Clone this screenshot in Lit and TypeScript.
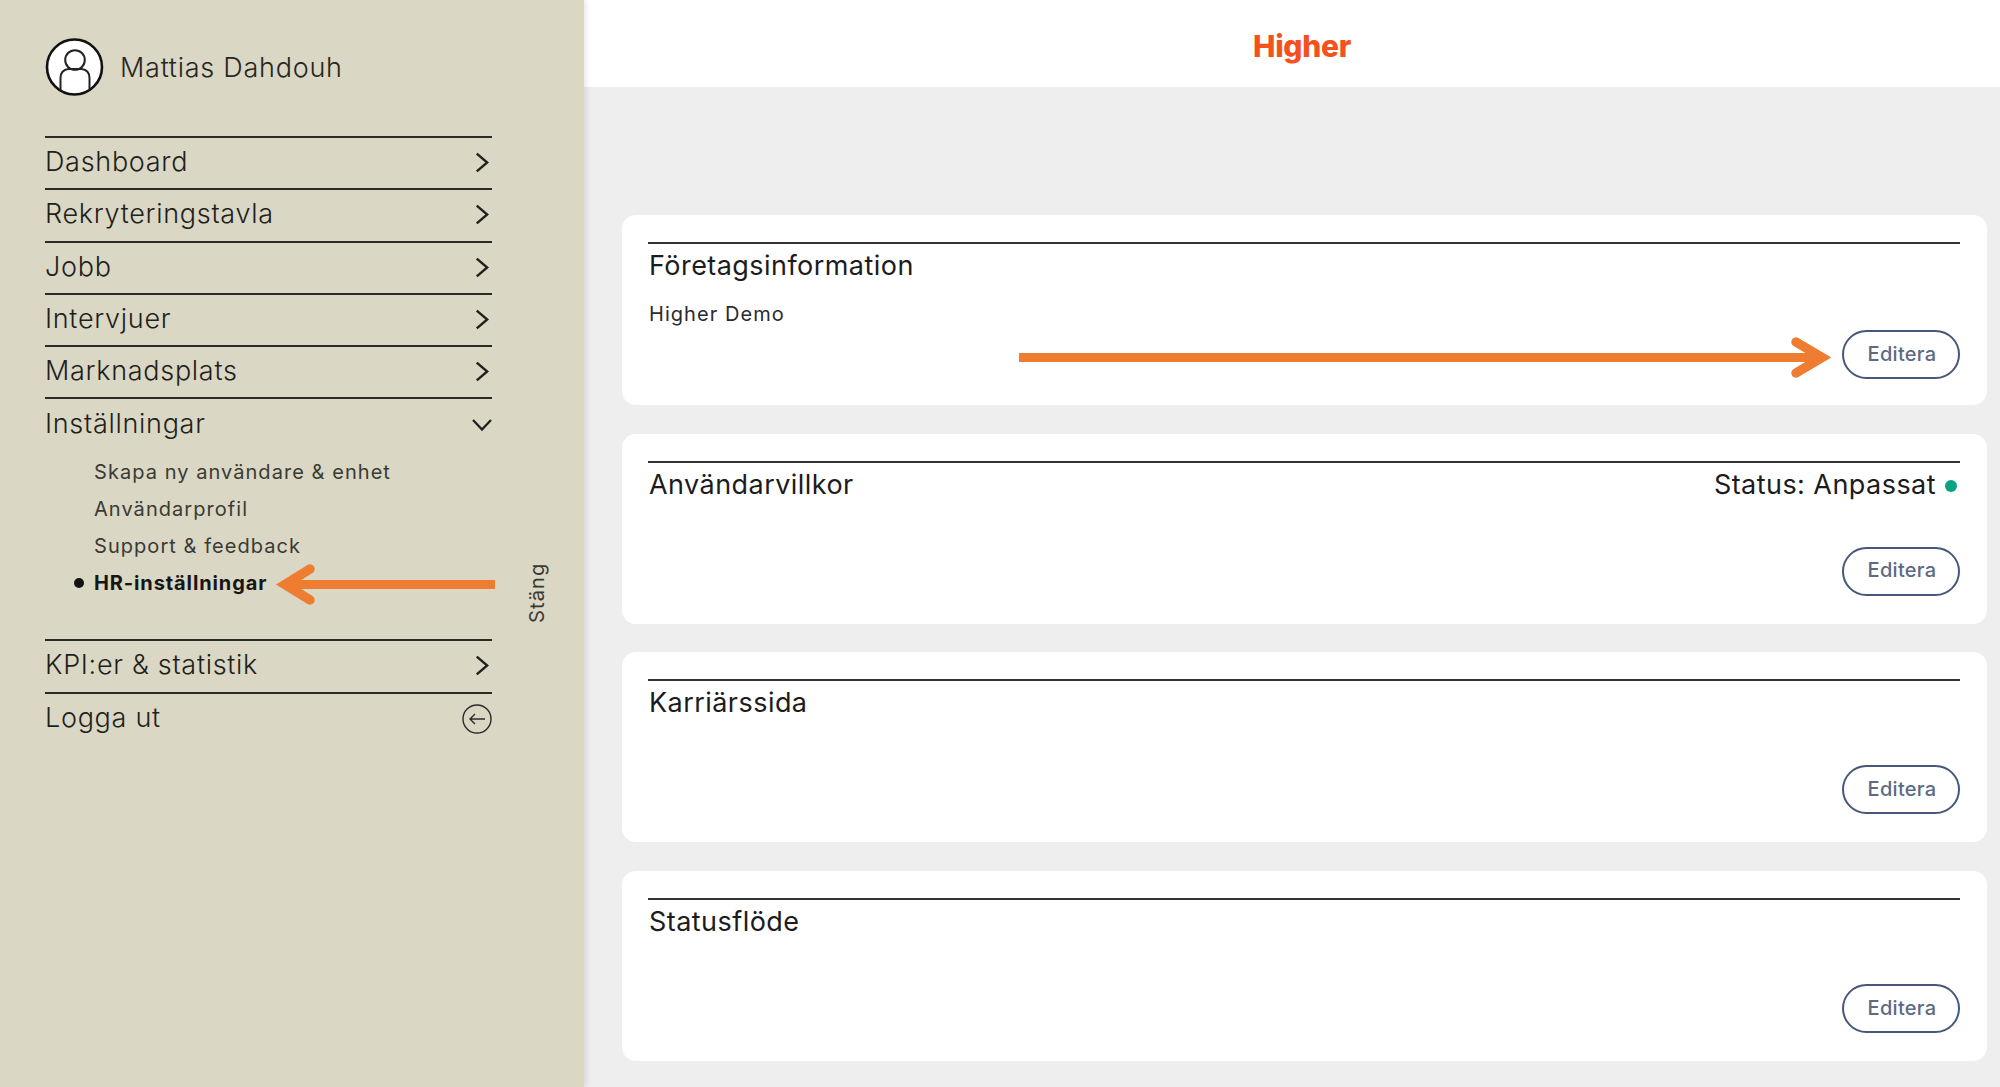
import { LitElement, html, css, svg } from "lit";
import { customElement } from "lit/decorators.js";

const chevron = html`<svg class="chev" viewBox="0 0 13 20"><path d="M1.5 1.5 L11.5 10 L1.5 18.5" fill="none" stroke="#1f1f1c" stroke-width="2.3"/></svg>`;
const chevronDown = html`<svg class="chev-down" viewBox="0 0 20 12"><path d="M1 1 L10 10.5 L19 1" fill="none" stroke="#1f1f1c" stroke-width="2.3"/></svg>`;
const logoutIcon = html`<svg class="logout" viewBox="0 0 30 30"><circle cx="15" cy="15" r="14" fill="none" stroke="#2b2b28" stroke-width="1.4"/><path d="M23 15 H8 M13 10 L8 15 L13 20" fill="none" stroke="#2b2b28" stroke-width="1.4"/></svg>`;
const avatar = html`<svg class="avatar" viewBox="0 0 58 58">
  <defs><clipPath id="c"><circle cx="29" cy="29" r="27"/></clipPath></defs>
  <circle cx="29" cy="29" r="27.5" fill="#fff" stroke="#111" stroke-width="2.6"/>
  <g clip-path="url(#c)" fill="none" stroke="#222" stroke-width="2">
    <circle cx="29.5" cy="22" r="9.8"/>
    <path d="M15 56 V40 Q15 32 23 31 H36 Q44 32 44 40 V56"/>
  </g>
</svg>`;

const topItems = ["Dashboard", "Rekryteringstavla", "Jobb", "Intervjuer", "Marknadsplats"];
const subItems = ["Skapa ny användare & enhet", "Användarprofil", "Support & feedback"];
const cards = [
  { title: "Företagsinformation", text: "Higher Demo" },
  { title: "Användarvillkor", status: "Status: Anpassat" },
  { title: "Karriärssida" },
  { title: "Statusflöde" },
];

@customElement("app-root")
export class AppRoot extends LitElement {
  static styles = css`
    :host {
      display: block;
      width: 2000px;
      height: 1087px;
      overflow: hidden;
      position: relative;
      font-family: "Inter", "Liberation Sans", sans-serif;
      color: #1f1f1c;
      background: #eeeeee;
    }
    .page {
      display: flex;
      height: 1087px;
    }
    .sidebar {
      width: 584px;
      flex: none;
      box-sizing: border-box;
      padding: 38px 0 0 45px;
      background: #dad7c4;
      box-shadow: 2px 0 6px rgba(0, 0, 0, 0.1);
      position: relative;
      z-index: 1;
      display: flex;
    }
    .nav-col {
      width: 447px;
      flex: none;
    }
    .profile {
      display: flex;
      align-items: center;
      gap: 16px;
      height: 58px;
      margin-bottom: 40px;
      font-size: 27px;
      font-weight: 300;
      letter-spacing: 0.75px;
      color: #262622;
    }
    .avatar {
      width: 59px;
      height: 58px;
      flex: none;
    }
    .row {
      box-sizing: border-box;
      height: 52.3px;
      border-top: 2px solid #2b2b26;
      display: flex;
      align-items: center;
      justify-content: space-between;
      font-size: 27px;
      font-weight: 300;
      letter-spacing: 0.7px;
    }
    .row > span {
      margin-top: -3px;
    }
    .chev {
      width: 14px;
      height: 21px;
      margin: -1px 3px 0 0;
    }
    .chev-down {
      width: 20px;
      height: 12px;
    }
    .logout {
      width: 30px;
      height: 30px;
    }
    .sub {
      list-style: none;
      margin: 0;
      padding: 3.5px 0 38px 49px;
      font-size: 20px;
      font-weight: 400;
      letter-spacing: 1.05px;
      color: #3a3a34;
    }
    .sub li {
      height: 37px;
      display: flex;
      align-items: center;
      position: relative;
    }
    .sub li.active {
      font-weight: 700;
      letter-spacing: 0.88px;
      color: #161614;
    }
    .sub li.active::before {
      content: "";
      position: absolute;
      left: -20px;
      top: 14px;
      width: 10px;
      height: 10px;
      border-radius: 50%;
      background: #111;
    }
    .close {
      margin: 523px 0 0 33px;
      writing-mode: vertical-rl;
      transform: rotate(180deg);
      height: 62px;
      font-size: 20px;
      letter-spacing: 1.1px;
      color: #3a3a34;
    }
    .main {
      flex: 1;
      min-width: 0;
    }
    .topbar {
      height: 87px;
      background: #fff;
      display: flex;
      align-items: center;
      justify-content: center;
      padding-left: 20px;
    }
    .logo {
      font-family: "Inter", sans-serif;
      font-weight: 800;
      font-size: 30px;
      color: #f4511e;
      letter-spacing: -0.3px;
      margin-top: 4px;
    }
    .cards {
      display: flex;
      flex-direction: column;
      gap: 28.7px;
      padding: 128px 13px 0 38px;
    }
    .card {
      box-sizing: border-box;
      height: 190px;
      background: #fff;
      border-radius: 14px;
      padding: 27px 27px 28px 26px;
      display: flex;
      flex-direction: column;
    }
    .card.has-text {
      padding-bottom: 26px;
    }
    .head {
      border-top: 2px solid #333;
      display: flex;
      justify-content: space-between;
      align-items: center;
      padding: 5px 0 0 1px;
      font-size: 27px;
      font-weight: 400;
      letter-spacing: 0.45px;
      color: #1c1c20;
    }
    .status {
      display: flex;
      align-items: center;
      gap: 9px;
      padding-right: 3px;
    }
    .dot {
      width: 12px;
      height: 12px;
      border-radius: 50%;
      background: #0aa37f;
      margin-top: 3px;
    }
    .text {
      font-size: 20px;
      letter-spacing: 1.05px;
      margin: 20px 0 0 1px;
      color: #2a2a30;
    }
    .btn {
      margin: auto 0 0 auto;
      box-sizing: border-box;
      width: 118px;
      height: 49px;
      border: 2.5px solid #46587a;
      border-radius: 25px;
      background: #fff;
      font: 500 20px "Inter", sans-serif;
      letter-spacing: 0.3px;
      color: #5c6a82;
      padding: 0 0 2px 2px;
    }
    .arrows {
      position: absolute;
      inset: 0;
      width: 2000px;
      height: 1087px;
      z-index: 2;
      pointer-events: none;
    }
  `;

  renderCard(c: { title: string; text?: string; status?: string }) {
    return html`<section class="card ${c.text ? "has-text" : ""}">
      <div class="head">
        <span>${c.title}</span>
        ${c.status ? html`<span class="status">${c.status}<i class="dot"></i></span>` : ""}
      </div>
      ${c.text ? html`<div class="text">${c.text}</div>` : ""}
      <button class="btn">Editera</button>
    </section>`;
  }

  render() {
    return html`<div class="page">
        <aside class="sidebar">
          <div class="nav-col">
            <div class="profile">${avatar}<span>Mattias Dahdouh</span></div>
            ${topItems.map((t) => html`<div class="row"><span>${t}</span>${chevron}</div>`)}
            <div class="row"><span>Inställningar</span>${chevronDown}</div>
            <ul class="sub">
              ${subItems.map((t) => html`<li>${t}</li>`)}
              <li class="active">HR-inställningar</li>
            </ul>
            <div class="row"><span>KPI:er &amp; statistik</span>${chevron}</div>
            <div class="row"><span>Logga ut</span>${logoutIcon}</div>
          </div>
          <div class="close">Stäng</div>
        </aside>
        <main class="main">
          <header class="topbar"><span class="logo">Higher</span></header>
          <div class="cards">${cards.map((c) => this.renderCard(c))}</div>
        </main>
      </div>
      <svg class="arrows" viewBox="0 0 2000 1087">
        ${svg`<g fill="none" stroke="#ef7d31">
          <path d="M1019 357.5 H1820" stroke-width="9"/>
          <path d="M1796 342 L1822 357.5 L1796 373" stroke-width="9.5" stroke-linecap="round"/>
          <path d="M495 584.5 H286" stroke-width="9"/>
          <path d="M310 569 L285 584.5 L310 600" stroke-width="9.5" stroke-linecap="round"/>
        </g>`}
      </svg>`;
  }
}
